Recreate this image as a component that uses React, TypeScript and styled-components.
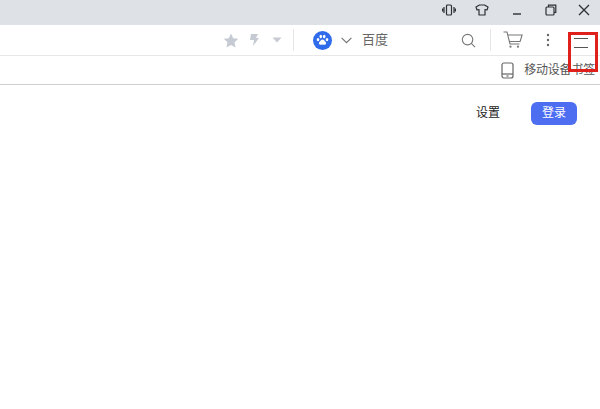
import React from 'react'
import styled, { createGlobalStyle } from 'styled-components'

const GlobalStyle = createGlobalStyle`
  html, body { margin: 0; padding: 0; background: #fff; }
  body { font-family: "Liberation Sans", "Noto Sans CJK SC", sans-serif; }
`

const Page = styled.div`
  position: relative;
  width: 600px;
  height: 409px;
  overflow: hidden;
  display: flex;
  flex-direction: column;
`

const TitleBar = styled.div`
  height: 25px;
  flex: none;
  box-sizing: border-box;
  padding-bottom: 6px;
  background: #dee1e6;
  display: flex;
  align-items: center;
  justify-content: flex-end;
`

const TitleButton = styled.div<{ $w: number }>`
  width: ${p => p.$w}px;
  height: 19px;
  display: flex;
  align-items: center;
  justify-content: center;
  color: #2c2f33;
`

const Toolbar = styled.div`
  height: 31px;
  flex: none;
  box-sizing: border-box;
  border-bottom: 1px solid #e8e8e8;
  display: flex;
  align-items: center;
  padding-left: 222px;
`

const Divider = styled.div<{ $left: number; $right: number }>`
  width: 1px;
  height: 22px;
  background: #e6e6e6;
  margin: 0 ${p => p.$right}px 0 ${p => p.$left}px;
`

const ToolIcon = styled.div<{ $w: number; $ml?: number }>`
  width: ${p => p.$w}px;
  margin-left: ${p => p.$ml ?? 0}px;
  height: 24px;
  flex: none;
  display: flex;
  align-items: center;
  justify-content: center;
`

const EngineName = styled.span`
  font-size: 13px;
  line-height: 15px;
  color: #666;
  margin: 0 0 1px 9px;
  width: 98px;
`

const BookmarkBar = styled.div`
  height: 29px;
  flex: none;
  box-sizing: border-box;
  border-bottom: 1px solid #cfcfcf;
  display: flex;
  align-items: center;
  justify-content: flex-end;
  gap: 10px;
  padding-right: 5px;
`

const BookmarkLabel = styled.span`
  font-size: 12px;
  line-height: 14px;
  letter-spacing: -0.2px;
  color: #555;
  white-space: nowrap;
  margin-bottom: 1px;
`

const Content = styled.div`
  flex: 1;
  display: flex;
  align-items: flex-start;
  justify-content: flex-end;
  gap: 31px;
  padding: 17px 23px 0 0;
`

const SettingsLink = styled.span`
  font-size: 12px;
  line-height: 23px;
  color: #222;
`

const LoginButton = styled.div`
  width: 46px;
  height: 23px;
  border-radius: 6px;
  background: #4e6ef2;
  color: #fff;
  font-size: 12px;
  line-height: 23px;
  text-align: center;
`

const Highlight = styled.div`
  position: absolute;
  left: 568px;
  top: 32px;
  width: 30px;
  height: 40px;
  box-sizing: border-box;
  border: 3px solid #e0201b;
  pointer-events: none;
`

export default function App() {
  return (
    <Page>
      <GlobalStyle />
      <TitleBar>
        <TitleButton $w={28}>
          <svg width="14" height="12" viewBox="0 0 14 12" fill="none" stroke="currentColor" strokeWidth="1.2">
            <rect x="4.5" y="1" width="5" height="10" rx="1" />
            <path d="M2 3v6M12 3v6M0.6 4.5v3M13.4 4.5v3" />
          </svg>
        </TitleButton>
        <TitleButton $w={37}>
          <svg width="14" height="12" viewBox="0 0 14 12" fill="none" stroke="currentColor" strokeWidth="1.2">
            <path d="M4.5 1h5l3.5 2-1 3-2-.5V11h-6V5.5l-2 .5-1-3z" strokeLinejoin="round" />
          </svg>
        </TitleButton>
        <TitleButton $w={34}>
          <svg width="10" height="12" viewBox="0 0 10 12" fill="none" stroke="currentColor" strokeWidth="1.4">
            <path d="M1 10h8" />
          </svg>
        </TitleButton>
        <TitleButton $w={33}>
          <svg width="12" height="12" viewBox="0 0 12 12" fill="none" stroke="currentColor" strokeWidth="1.2">
            <rect x="1" y="3" width="8" height="8" rx="1" />
            <path d="M3.5 3V1.2h7.3v7.3H9" />
          </svg>
        </TitleButton>
        <TitleButton $w={33}>
          <svg width="12" height="12" viewBox="0 0 12 12" fill="none" stroke="currentColor" strokeWidth="1.3">
            <path d="M1 1l10 10M11 1L1 11" />
          </svg>
        </TitleButton>
      </TitleBar>
      <Toolbar>
        <ToolIcon $w={18}>
          <svg width="16" height="15" viewBox="0 0 16 15" fill="#c5cad3">
            <path d="M8 0.5l2.2 4.7 5.1.6-3.8 3.5 1 5.1L8 11.9l-4.5 2.5 1-5.1L.7 5.8l5.1-.6z" />
          </svg>
        </ToolIcon>
        <ToolIcon $w={10} $ml={9}>
          <svg width="10" height="14" viewBox="0 0 10 14" fill="#c5cad3">
            <path d="M2 1h7L7 5h3l-6 8 1-6H1z" />
          </svg>
        </ToolIcon>
        <ToolIcon $w={10} $ml={13}>
          <svg width="10" height="6" viewBox="0 0 10 6" fill="#c5cad3">
            <path d="M0.5 0.5h9L5 5.5z" />
          </svg>
        </ToolIcon>
        <Divider $left={11} $right={19} />
        <ToolIcon $w={19}>
          <svg width="19" height="19" viewBox="0 0 19 19">
            <circle cx="9.5" cy="9.5" r="9.5" fill="#2f6bea" />
            <g fill="#fff">
              <ellipse cx="5" cy="8.6" rx="1.3" ry="1.7" />
              <ellipse cx="7.8" cy="5.6" rx="1.3" ry="1.8" />
              <ellipse cx="11.2" cy="5.6" rx="1.3" ry="1.8" />
              <ellipse cx="14" cy="8.6" rx="1.3" ry="1.7" />
              <path d="M9.5 8.4c1.6 0 2 1.5 3 2.4 1 1 .7 3-1.1 3-.8 0-1.2-.3-1.9-.3s-1.1.3-1.9.3c-1.8 0-2.1-2-1.1-3 1-.9 1.4-2.4 3-2.4z" />
            </g>
          </svg>
        </ToolIcon>
        <ToolIcon $w={14} $ml={7}>
          <svg width="11" height="7" viewBox="0 0 11 7" fill="none" stroke="#777" strokeWidth="1.2">
            <path d="M0.6 0.8l4.9 4.9 4.9-4.9" />
          </svg>
        </ToolIcon>
        <EngineName>百度</EngineName>
        <ToolIcon $w={16}>
          <svg width="15" height="15" viewBox="0 0 16 16" fill="none" stroke="#777" strokeWidth="1.2">
            <circle cx="7" cy="7" r="5.6" />
            <path d="M11 11l4 4" />
          </svg>
        </ToolIcon>
        <Divider $left={14} $right={12} />
        <ToolIcon $w={20}>
          <svg width="20" height="18" viewBox="0 0 20 18" fill="none" stroke="#777" strokeWidth="1.1">
            <path d="M0.5 1h3.5l3 12h9.500M4.600 4h14.500l-2 6.500H6.300" />
            <circle cx="7.500" cy="15.700" r="1.100" fill="#777" stroke="none" />
            <circle cx="15" cy="15.700" r="1.100" fill="#777" stroke="none" />
          </svg>
        </ToolIcon>
        <ToolIcon $w={4} $ml={23}>
          <svg width="4" height="14" viewBox="0 0 4 14" fill="#666">
            <circle cx="2" cy="2" r="1.200" />
            <circle cx="2" cy="7" r="1.200" />
            <circle cx="2" cy="12" r="1.200" />
          </svg>
        </ToolIcon>
        <ToolIcon $w={14} $ml={24}>
          <svg width="14" height="24" viewBox="0 0 14 24" fill="none" stroke="#555" strokeWidth="1">
            <path d="M0 10.500h14M0 19.500h14" />
          </svg>
        </ToolIcon>
      </Toolbar>
      <BookmarkBar>
        <svg width="13" height="17" viewBox="0 0 13 17" fill="none" stroke="#666" strokeWidth="1.200">
          <rect x="1" y="1" width="11" height="15" rx="2" />
          <path d="M1 12h11" />
          <path d="M5.500 14h2" />
        </svg>
        <BookmarkLabel>移动设备书签</BookmarkLabel>
      </BookmarkBar>
      <Content>
        <SettingsLink>设置</SettingsLink>
        <LoginButton>登录</LoginButton>
      </Content>
      <Highlight />
    </Page>
  )
}
